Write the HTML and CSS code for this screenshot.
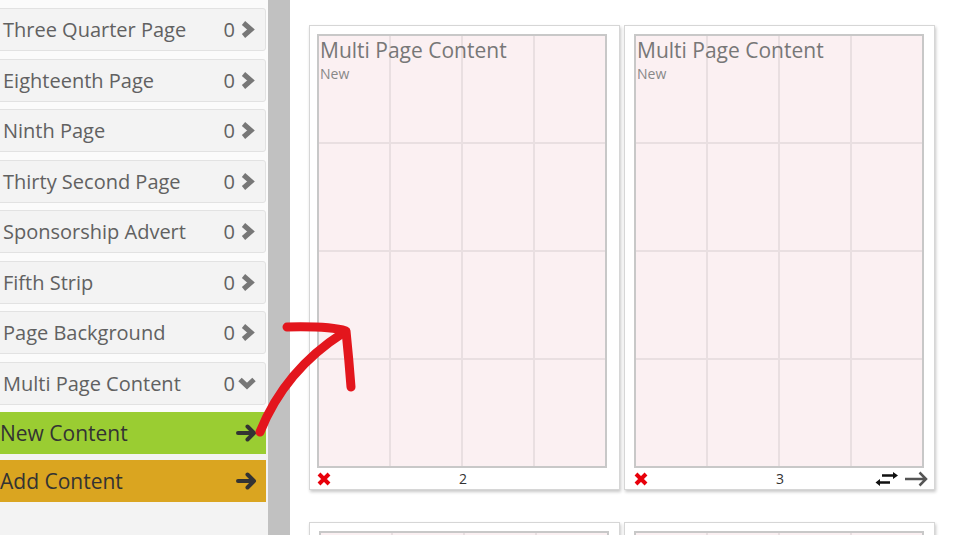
FILE: index.html
```html
<!DOCTYPE html>
<html>
<head>
<meta charset="utf-8">
<link rel="stylesheet" href="styles.css">
</head>
<body>
<div class="app">
  <aside class="sidebar">
    <ul class="types">
      <li class="type"><span class="name">Three Quarter Page</span><span class="count">0</span><svg class="chev" viewBox="0 0 15 19"><polyline points="3.5,3 11,9.5 3.5,16"/></svg></li>
      <li class="type"><span class="name">Eighteenth Page</span><span class="count">0</span><svg class="chev" viewBox="0 0 15 19"><polyline points="3.5,3 11,9.5 3.5,16"/></svg></li>
      <li class="type"><span class="name">Ninth Page</span><span class="count">0</span><svg class="chev" viewBox="0 0 15 19"><polyline points="3.5,3 11,9.5 3.5,16"/></svg></li>
      <li class="type"><span class="name">Thirty Second Page</span><span class="count">0</span><svg class="chev" viewBox="0 0 15 19"><polyline points="3.5,3 11,9.5 3.5,16"/></svg></li>
      <li class="type"><span class="name">Sponsorship Advert</span><span class="count">0</span><svg class="chev" viewBox="0 0 15 19"><polyline points="3.5,3 11,9.5 3.5,16"/></svg></li>
      <li class="type"><span class="name">Fifth Strip</span><span class="count">0</span><svg class="chev" viewBox="0 0 15 19"><polyline points="3.5,3 11,9.5 3.5,16"/></svg></li>
      <li class="type"><span class="name">Page Background</span><span class="count">0</span><svg class="chev" viewBox="0 0 15 19"><polyline points="3.5,3 11,9.5 3.5,16"/></svg></li>
      <li class="type"><span class="name">Multi Page Content</span><span class="count">0</span><svg class="chev down" viewBox="0 0 20 19"><polyline points="3,5.5 10,12 17,5.5"/></svg></li>
    </ul>
    <div class="action new"><span>New Content</span><svg class="go" viewBox="0 0 22 18"><path d="M2 9 H18 M11.5 2.5 L18 9 L11.5 15.5"/></svg></div>
    <div class="action add"><span>Add Content</span><svg class="go" viewBox="0 0 22 18"><path d="M2 9 H18 M11.5 2.5 L18 9 L11.5 15.5"/></svg></div>
  </aside>
  <div class="divider"></div>
  <main class="pages">
    <div class="page">
      <div class="sheet">
        <div class="cell"></div><div class="cell"></div><div class="cell"></div><div class="cell"></div>
        <div class="cell"></div><div class="cell"></div><div class="cell"></div><div class="cell"></div>
        <div class="cell"></div><div class="cell"></div><div class="cell"></div><div class="cell"></div>
        <div class="cell"></div><div class="cell"></div><div class="cell"></div><div class="cell"></div>
        <div class="label"><div class="title">Multi Page Content</div><div class="status">New</div></div>
      </div>
      <div class="foot">
        <svg class="del" viewBox="0 0 14 14"><path d="M2 2 L12 12 M12 2 L2 12"/></svg>
        <span class="num">2</span>
        <span class="tools"></span>
      </div>
    </div>
    <div class="page">
      <div class="sheet">
        <div class="cell"></div><div class="cell"></div><div class="cell"></div><div class="cell"></div>
        <div class="cell"></div><div class="cell"></div><div class="cell"></div><div class="cell"></div>
        <div class="cell"></div><div class="cell"></div><div class="cell"></div><div class="cell"></div>
        <div class="cell"></div><div class="cell"></div><div class="cell"></div><div class="cell"></div>
        <div class="label"><div class="title">Multi Page Content</div><div class="status">New</div></div>
      </div>
      <div class="foot">
        <svg class="del" viewBox="0 0 14 14"><path d="M2 2 L12 12 M12 2 L2 12"/></svg>
        <span class="num">3</span>
        <span class="tools">
          <svg class="swap" viewBox="0 0 24 16"><path class="ln" d="M7 4.5 H19 M3 11.5 H15"/><path class="hd" d="M18 1 L23 4.5 L18 8 Z M5 8 L0.5 11.5 L5 15 Z"/></svg>
          <svg class="next" viewBox="0 0 25 16"><path d="M1 8 H22 M15.5 1.5 L22 8 L15.5 14.5"/></svg>
        </span>
      </div>
    </div>
    <div class="page">
      <div class="sheet">
        <div class="cell"></div><div class="cell"></div><div class="cell"></div><div class="cell"></div>
      </div>
    </div>
    <div class="page">
      <div class="sheet">
        <div class="cell"></div><div class="cell"></div><div class="cell"></div><div class="cell"></div>
      </div>
    </div>
  </main>
</div>
<svg class="annotation" viewBox="0 0 955 535">
  <path d="M260 432 Q285 370 343 333"/>
  <path d="M287 327 Q330 326 346 331 Q349 360 351 387"/>
</svg>
</body>
</html>
```
FILE: styles.css
```css
html, body {
  margin: 0;
  padding: 0;
}
body {
  font-family: "Open Sans", "Noto Sans", sans-serif;
  background: #fff;
  width: 955px;
  height: 535px;
  overflow: hidden;
  position: relative;
}
.app {
  display: flex;
  height: 535px;
  overflow: hidden;
}
.sidebar {
  width: 268px;
  flex: none;
  background: #f3f3f3;
  overflow: hidden;
}
.types {
  list-style: none;
  margin: 0;
  padding: 8px 0 7px 0;
  background: #fbfbfb;
}
.type {
  display: flex;
  align-items: center;
  box-sizing: border-box;
  height: 43px;
  margin: 0 2px 7.57px -4px;
  padding: 0 10px 0 6px;
  border: 1px solid #e2e2e2;
  border-radius: 3px;
  background: #f3f3f3;
  color: #616161;
  font-size: 20px;
  font-weight: 400;
}
.type:last-child {
  margin-bottom: 0;
}
.name {
  flex: 1;
  white-space: nowrap;
}
.count {
  margin-right: 5px;
}
.chev {
  width: 15px;
  height: 19px;
  fill: none;
  stroke: #777;
  stroke-width: 5;
}
.chev.down {
  width: 20px;
  margin-left: -3px;
  margin-right: -2px;
}
.action {
  display: flex;
  align-items: center;
  justify-content: space-between;
  height: 42px;
  width: 266px;
  box-sizing: border-box;
  padding: 0 8px 0 0;
  color: #333;
  font-size: 21px;
  font-weight: 400;
}
.action.new {
  background: #9acd32;
  margin-bottom: 6px;
}
.action.add {
  background: #daa520;
}
.go {
  width: 22px;
  height: 18px;
  fill: none;
  stroke: #333;
  stroke-width: 4;
  stroke-linecap: round;
  stroke-linejoin: round;
}
.divider {
  width: 22px;
  flex: none;
  background: #c1c1c1;
}
.pages {
  flex: 1;
  display: flex;
  flex-wrap: wrap;
  align-content: flex-start;
  column-gap: 4px;
  row-gap: 32px;
  padding: 25px 0 0 19px;
  overflow: hidden;
}
.page {
  width: 311px;
  height: 465px;
  box-sizing: border-box;
  border: 1px solid #d6d6d6;
  box-shadow: 1px 2px 3px rgba(0, 0, 0, 0.22);
  background: #fff;
  padding: 8px 12px 0 7px;
}
.page + .page {
  padding-left: 9px;
  padding-right: 10px;
}
.sheet {
  position: relative;
  height: 434px;
  box-sizing: border-box;
  border: 2px solid #c8c8c8;
  background: #e9dfe1;
  display: grid;
  grid-template-columns: repeat(4, 1fr);
  grid-template-rows: repeat(4, 1fr);
  gap: 2px;
}
.cell {
  background: #fbf0f2;
}
.label {
  position: absolute;
  top: 0;
  left: 1px;
  color: #777;
}
.title {
  font-size: 21px;
  line-height: 28px;
}
.status {
  font-size: 14px;
  line-height: 16px;
  color: #888;
  margin-top: 2px;
}
.foot {
  display: grid;
  grid-template-columns: 1fr auto 1fr;
  align-items: center;
  height: 21px;
  margin-right: -5px;
}
.del {
  width: 14px;
  height: 14px;
  fill: none;
  stroke: #e8000b;
  stroke-width: 4;
}
.num {
  font-size: 14px;
  color: #333;
  margin-right: 3px;
}
.tools {
  display: flex;
  justify-content: flex-end;
  align-items: center;
  gap: 5px;
}
.swap {
  width: 24px;
  height: 16px;
}
.swap .ln {
  fill: none;
  stroke: #111;
  stroke-width: 2.5;
}
.swap .hd {
  fill: #111;
}
.next {
  width: 25px;
  height: 16px;
  fill: none;
  stroke: #555;
  stroke-width: 2.5;
}
.annotation {
  position: absolute;
  left: 0;
  top: 0;
  width: 955px;
  height: 535px;
  pointer-events: none;
  fill: none;
  stroke: #e3161d;
  stroke-width: 9;
  stroke-linecap: round;
  stroke-linejoin: round;
}
```
